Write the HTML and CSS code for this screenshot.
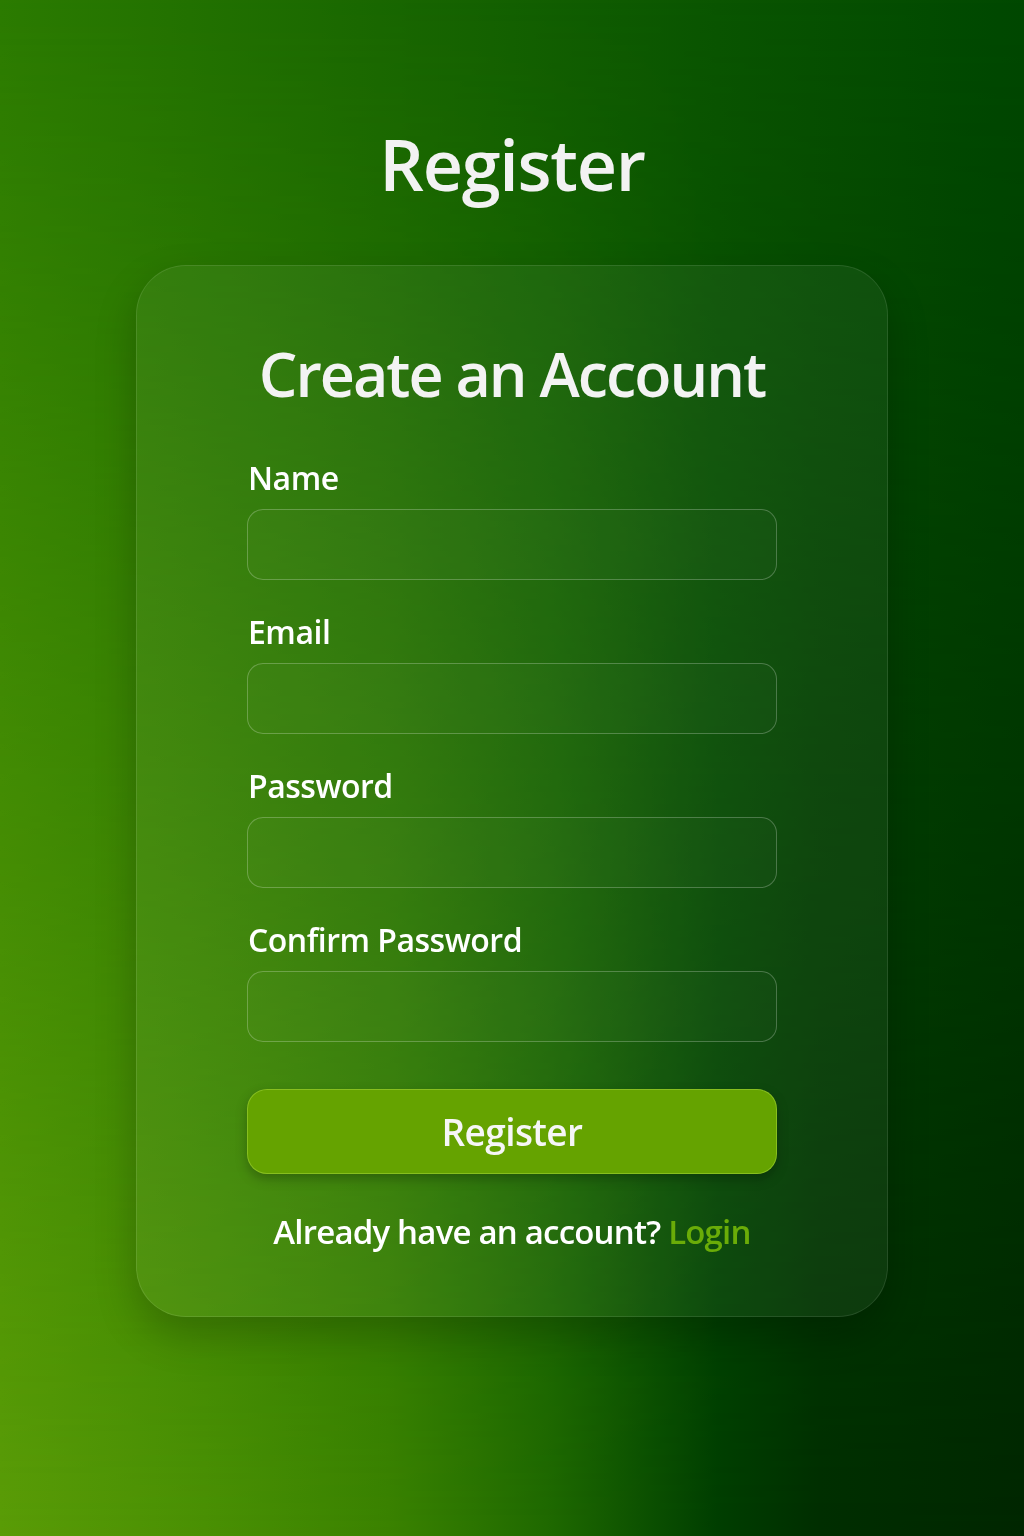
FILE: index.html
```html
<!DOCTYPE html>
<html lang="en">
<head>
<meta charset="utf-8">
<title>Register</title>
<link rel="stylesheet" href="styles.css">
</head>
<body>
<div class="page">
  <h1 class="title">Register</h1>
  <form class="card">
    <h2 class="card-title">Create an Account</h2>
    <div class="fields">
      <label class="field">
        <span class="label">Name</span>
        <input class="input" type="text">
      </label>
      <label class="field">
        <span class="label">Email</span>
        <input class="input" type="email">
      </label>
      <label class="field">
        <span class="label">Password</span>
        <input class="input" type="password">
      </label>
      <label class="field">
        <span class="label">Confirm Password</span>
        <input class="input" type="password">
      </label>
    </div>
    <button class="btn" type="button">Register</button>
    <p class="alt">Already have an account? <a class="link" href="#">Login</a></p>
  </form>
</div>
</body>
</html>
```

FILE: styles.css
```css
html, body {
  margin: 0;
  padding: 0;
}
body {
  font-family: "Open Sans", "Noto Sans", sans-serif;
  color: #f3f3f3;
  background: linear-gradient(to right, #2b7b00 0%, #1a6800 35%, #136000 50%, #0a5500 70%, #004800 100%);
  min-height: 1536px;
}
body::before {
  content: "";
  position: fixed;
  inset: 0;
  z-index: -1;
  background: linear-gradient(to right, #5a9c06 0%, #4a9003 20%, #3a8200 38%, #1e6800 54%, #0a4e00 64%, #003e00 70%, #002e00 80%, #002600 100%);
  -webkit-mask-image: linear-gradient(to bottom, transparent 0%, #000 100%);
  mask-image: linear-gradient(to bottom, transparent 0%, #000 100%);
}
.page {
  position: relative;
  display: flex;
  flex-direction: column;
  align-items: center;
  padding-top: 129px;
}
.title {
  margin: 0;
  font-size: 70px;
  line-height: 71px;
  font-weight: 600;
  letter-spacing: -1.3px;
  color: #f2f2f2;
}
.card {
  box-sizing: border-box;
  width: 752px;
  margin-top: 65px;
  padding: 77px 110px 67px;
  border-radius: 50px;
  border: 1px solid rgba(255, 255, 255, 0.1);
  background: rgba(255, 255, 255, 0.05);
  box-shadow: 0 18px 40px rgba(0, 0, 0, 0.22);
  display: flex;
  flex-direction: column;
}
.card-title {
  margin: 0;
  text-align: center;
  white-space: nowrap;
  font-size: 61px;
  line-height: 62px;
  font-weight: 600;
  letter-spacing: -2px;
  color: #f3f3f3;
}
.fields {
  display: flex;
  flex-direction: column;
  gap: 35px;
  margin-top: 56px;
}
.field {
  display: flex;
  flex-direction: column;
  gap: 15px;
}
.label {
  font-size: 32px;
  line-height: 33px;
  font-weight: 600;
  color: #ffffff;
  padding-left: 1px;
  letter-spacing: -0.5px;
}
.input {
  box-sizing: border-box;
  width: 100%;
  height: 71px;
  margin: 0;
  border: 1.5px solid rgba(255, 255, 255, 0.24);
  border-radius: 16px;
  background: rgba(255, 255, 255, 0.02);
  outline: none;
  font: inherit;
  color: #fff;
  padding: 0 18px;
}
.btn {
  margin-top: 47px;
  height: 85px;
  border: 1px solid rgba(170, 220, 60, 0.5);
  border-radius: 20px;
  background: #65a300;
  box-shadow: 0 5px 12px rgba(0, 0, 0, 0.25);
  font-family: inherit;
  font-size: 37px;
  font-weight: 600;
  color: #f6f6f6;
  letter-spacing: -0.6px;
  cursor: pointer;
}
.alt {
  margin: 41px 0 0;
  text-align: center;
  font-size: 33px;
  line-height: 34px;
  font-weight: 600;
  color: #ffffff;
  letter-spacing: -0.8px;
}
.link {
  color: #6aac08;
  text-decoration: none;
}
```
